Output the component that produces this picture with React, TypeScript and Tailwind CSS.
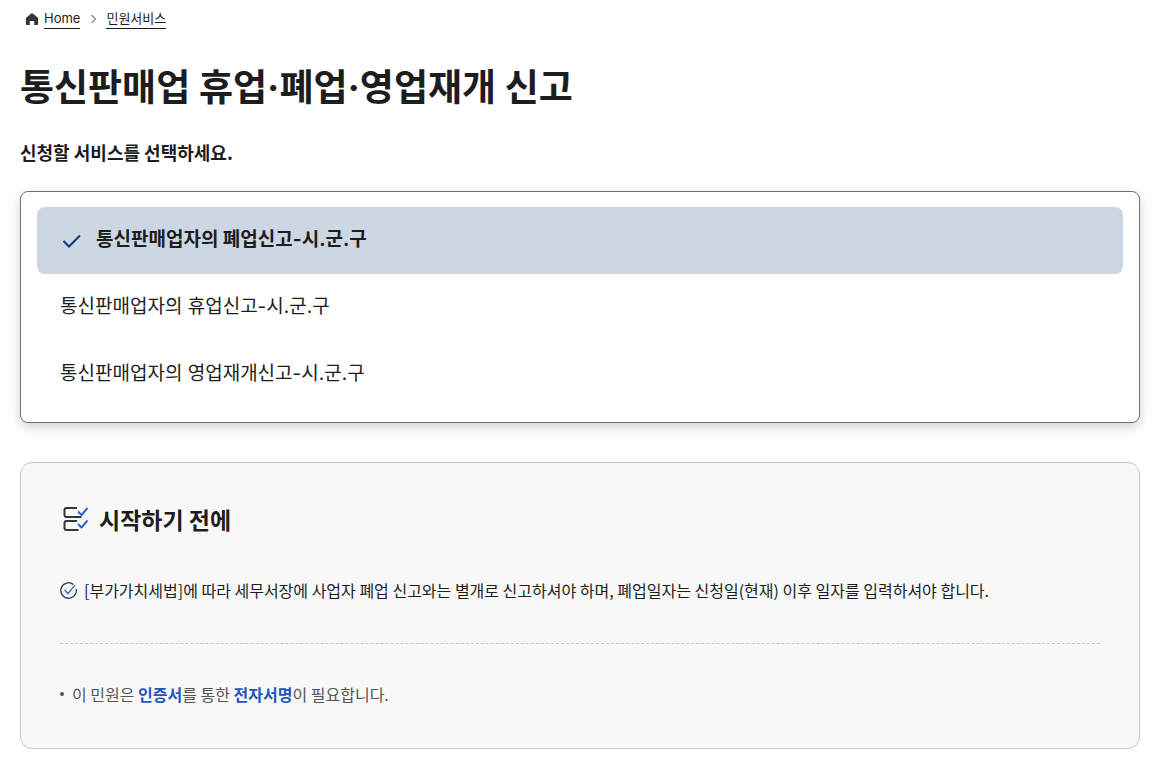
import { useState } from 'react';

const services = [
    '통신판매업자의 폐업신고-시.군.구',
    '통신판매업자의 휴업신고-시.군.구',
    '통신판매업자의 영업재개신고-시.군.구',
];

function Breadcrumb() {
    return (
        <nav aria-label="breadcrumb" className="flex items-center px-1 font-['Inter','Noto_Sans_CJK_KR',sans-serif] text-[13px] leading-5">
            <svg viewBox="0 0 16 16" className="mr-1 size-4" fill="#33363d">
                <path d="M7.3 2.5 2.4 6.4q-.5.4-.5 1V13q0 1 1 1h2.8v-3q0-1 1-1h2.6q1 0 1 1v3h2.8q1 0 1-1V7.4q0-.6-.5-1L8.7 2.5q-.7-.5-1.4 0Z" />
            </svg>
            <a href="#" className="border-b border-[#1d1d1d]">Home</a>
            <svg viewBox="0 0 16 16" className="mx-[5px] size-4" fill="none" stroke="#33363d">
                <path d="m6.5 4 4 4-4 4" />
            </svg>
            <a href="#" className="border-b border-[#1d1d1d]">민원서비스</a>
        </nav>
    );
}

function ServiceList() {
    const [selected, setSelected] = useState(0);

    return (
        <div className="mt-[27px] rounded-lg border border-[#717171] bg-white px-4 pt-[15px] pb-[14px] font-['Inter','Noto_Sans_CJK_KR',sans-serif] shadow-[0_4px_12px_rgba(0,0,0,0.18)]">
            {services.map((name, i) => (
                <button
                    key={name}
                    type="button"
                    onClick={() => setSelected(i)}
                    className={
                        i === selected
                            ? 'flex h-[67px] w-full items-center gap-3 rounded-lg bg-[#cdd6e3] px-[23px] text-left text-[19px] font-bold'
                            : 'flex h-[67px] w-full items-center gap-3 rounded-lg px-[23px] text-left text-[19px]'
                    }
                >
                    {i === selected && (
                        <svg viewBox="0 0 24 24" className="size-6" fill="none" stroke="#063a74" strokeWidth="2">
                            <path d="m3.5 12 5.5 5.5L20 6.5" />
                        </svg>
                    )}
                    {name}
                </button>
            ))}
        </div>
    );
}

function BeforeStart() {
    return (
        <section className="mt-[39px] rounded-xl border border-[#c6c6c6] bg-[#f8f8f8] px-[39px] py-10">
            <h3 className="flex items-center gap-[7px] text-[23px] leading-8 font-bold">
                <svg viewBox="0 0 32 32" className="size-8" fill="none" strokeWidth="2" strokeLinejoin="round">
                    <path stroke="#33363d" d="M17 5H6.5q-2 0-2 2v5q0 2 2 2h15M17 18H6.5q-2 0-2 2v5q0 2 2 2h12" />
                    <path stroke="#2f66c9" d="m18 8.5 3.5 3.5 6-7M18 21l3.5 3.5 6-7" />
                </svg>
                시작하기 전에
            </h3>
            <p className="mt-[41px] flex items-center gap-[7px] text-base leading-7">
                <svg viewBox="0 0 16 16" className="size-[17px]" fill="none">
                    <path stroke="#33363d" strokeWidth="1.2" d="M15.2 6.5A7.3 7.3 0 1 1 12.6 2.300" />
                    <path stroke="#2f66c9" strokeWidth="1.3" d="m4.300 7.300 3.200 3.700 6.500-8" />
                </svg>
                [부가가치세법]에 따라 세무서장에 사업자 폐업 신고와는 별개로 신고하셔야 하며, 폐업일자는 신청일(현재) 이후 일자를 입력하셔야 합니다.
            </p>
            <ul className="mt-[39px] border-t border-dashed border-[#c6c6c6] pt-9 text-base leading-7 text-[#555555]">
                <li className="flex items-center gap-2">
                    <span className="size-1 rounded-full bg-[#555555]" />
                    <span>
                        이 민원은 <strong className="text-[#1d56bc]">인증서</strong>를 통한{' '}
                        <strong className="text-[#1d56bc]">전자서명</strong>이 필요합니다.
                    </span>
                </li>
            </ul>
        </section>
    );
}

export default function App() {
    return (
        <main className="bg-white py-2 pr-8 pl-5 font-['Noto_Sans_CJK_KR',sans-serif] text-[#1d1d1d]">
            <Breadcrumb />
            <h1 className="mt-[31px] font-['Inter','Noto_Sans_CJK_KR',sans-serif] text-[37px] leading-[56px] font-bold">
                통신판매업 휴업·폐업·영업재개 신고
            </h1>
            <h2 className="mt-6 text-lg leading-6 font-bold">신청할 서비스를 선택하세요.</h2>
            <ServiceList />
            <BeforeStart />
        </main>
    );
}
